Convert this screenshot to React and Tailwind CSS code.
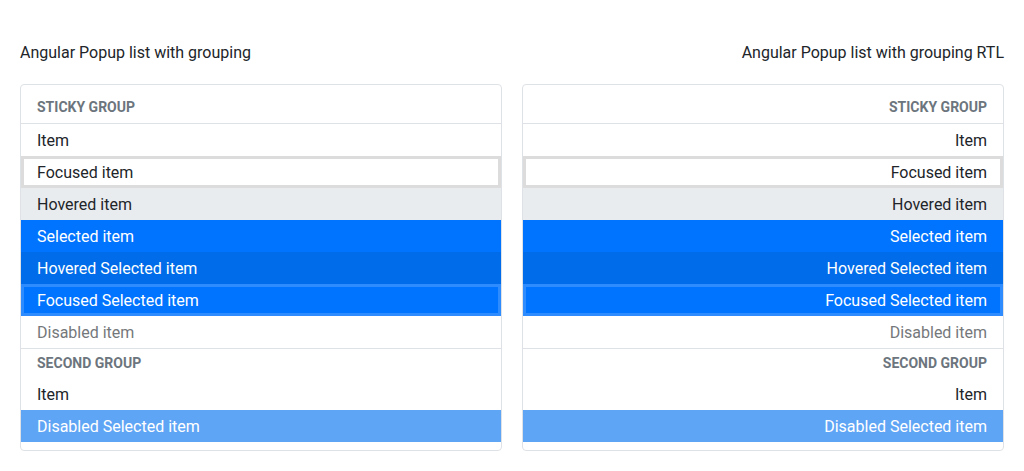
import React from "react"

const items = [
  { kind: "header", text: "Sticky group", sticky: true },
  { text: "Item" },
  { text: "Focused item", state: "focused" },
  { text: "Hovered item", state: "hovered" },
  { text: "Selected item", state: "selected" },
  { text: "Hovered Selected item", state: "hoveredSelected" },
  { text: "Focused Selected item", state: "focusedSelected" },
  { text: "Disabled item", state: "disabled" },
  { kind: "header", text: "Second group" },
  { text: "Item" },
  { text: "Disabled Selected item", state: "disabledSelected" },
]

const stateClass = {
  focused: "bg-white text-[#212529] shadow-[inset_0_0_0_3px_#dcdcdc]",
  hovered: "bg-[#e9ecef] text-[#212529]",
  selected: "bg-[#0074ff] text-white",
  hoveredSelected: "bg-[#006ce9] text-white",
  focusedSelected: "bg-[#0074ff] text-white shadow-[inset_0_0_0_3px_#2e8cff]",
  disabled: "text-[#75787b]",
  disabledSelected: "bg-[#5fa5f5] text-white",
}

function PopupList({ rtl }) {
  return (
    <div
      dir={rtl ? "rtl" : "ltr"}
      className="border border-[#dee2e6] rounded pb-2 bg-white"
    >
      {items.map((it, i) => {
        if (it.kind === "header") {
          return it.sticky ? (
            <div
              key={i}
              className="pt-[12px] pb-[5px] px-4 leading-[21px] border-b border-[#dee2e6] text-[14px] font-bold uppercase text-[#6c757d]"
            >
              {it.text}
            </div>
          ) : (
            <div
              key={i}
              className="border-t border-[#dee2e6] px-4 pt-1 pb-1 leading-[21px] text-[14px] font-bold uppercase text-[#6c757d]"
            >
              {it.text}
            </div>
          )
        }
        return (
          <div
            key={i}
            className={
              "px-4 pt-[5px] pb-[3px] leading-6 text-[16px] " +
              (stateClass[it.state] || "text-[#212529]")
            }
          >
            {it.text}
          </div>
        )
      })}
    </div>
  )
}

export default function App() {
  return (
    <div className="bg-white min-h-[471px] px-5 pt-[41px] font-['Roboto',sans-serif] text-[#212529]">
      <div className="grid grid-cols-2 gap-5">
        <div>
          <h4 className="text-[16px] leading-6 mb-[19px]">Angular Popup list with grouping</h4>
          <PopupList />
        </div>
        <div>
          <h4 className="text-[16px] leading-6 mb-[19px] text-right">Angular Popup list with grouping RTL</h4>
          <PopupList rtl />
        </div>
      </div>
    </div>
  )
}
